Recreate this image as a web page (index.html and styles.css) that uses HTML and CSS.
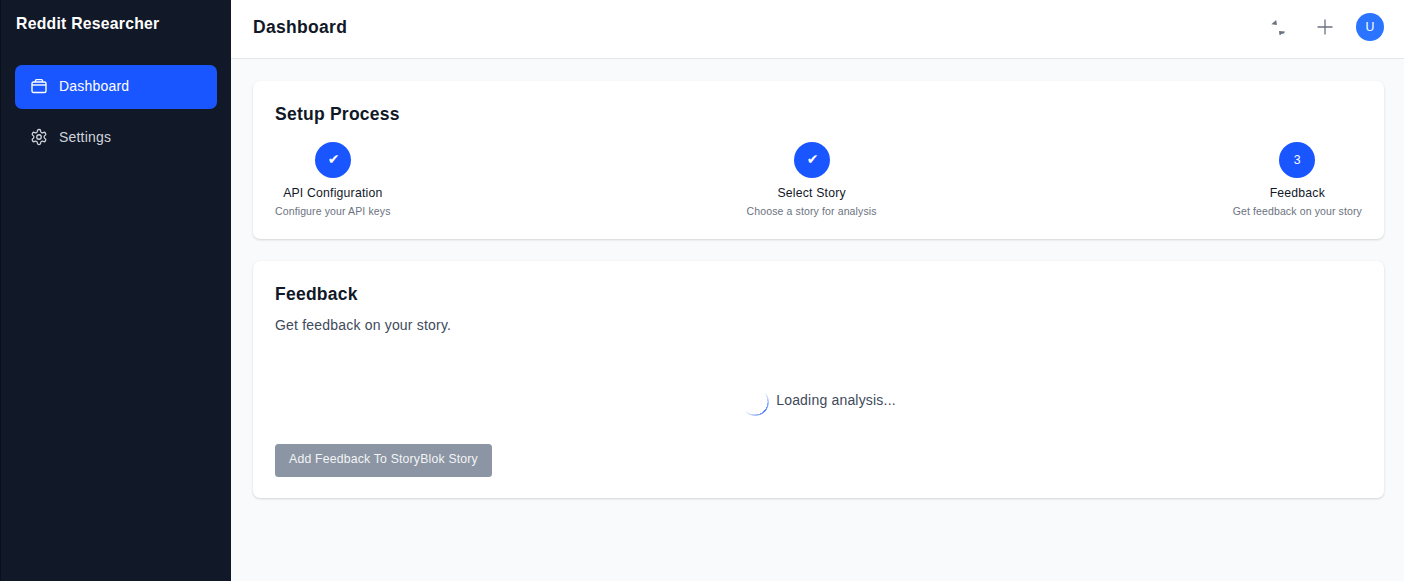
FILE: index.html
```html
<!DOCTYPE html>
<html lang="en">
<head>
<meta charset="utf-8">
<title>Dashboard</title>
<link rel="stylesheet" href="styles.css">
</head>
<body>
<div class="app">
  <aside class="sidebar">
    <div class="brand">Reddit Researcher</div>
    <nav class="nav">
      <a class="nav-item active">
        <svg class="nav-icon" viewBox="0 0 16 16" fill="none" stroke="currentColor" stroke-width="1.4" stroke-linejoin="round"><rect x="1" y="4" width="14" height="10.5" rx="1.5"/><path d="M4.5 4V2.6a1 1 0 0 1 1-1h5a1 1 0 0 1 1 1V4"/><path d="M1 7h14"/></svg>
        <span>Dashboard</span>
      </a>
      <a class="nav-item">
        <svg class="nav-icon gear" viewBox="0 0 24 24" fill="none" stroke="currentColor" stroke-width="1.7" stroke-linecap="round" stroke-linejoin="round"><path d="M12.22 2h-.44a2 2 0 0 0-2 2v.18a2 2 0 0 1-1 1.73l-.43.25a2 2 0 0 1-2 0l-.15-.08a2 2 0 0 0-2.73.73l-.22.38a2 2 0 0 0 .73 2.73l.15.1a2 2 0 0 1 1 1.72v.51a2 2 0 0 1-1 1.74l-.15.09a2 2 0 0 0-.73 2.73l.22.38a2 2 0 0 0 2.73.73l.15-.08a2 2 0 0 1 2 0l.43.25a2 2 0 0 1 1 1.73V20a2 2 0 0 0 2 2h.44a2 2 0 0 0 2-2v-.18a2 2 0 0 1 1-1.73l.43-.25a2 2 0 0 1 2 0l.15.08a2 2 0 0 0 2.73-.73l.22-.39a2 2 0 0 0-.73-2.73l-.15-.08a2 2 0 0 1-1-1.74v-.5a2 2 0 0 1 1-1.74l.15-.09a2 2 0 0 0 .73-2.73l-.22-.38a2 2 0 0 0-2.73-.73l-.15.08a2 2 0 0 1-2 0l-.43-.25a2 2 0 0 1-1-1.73V4a2 2 0 0 0-2-2z"/><circle cx="12" cy="12" r="3"/></svg>
        <span>Settings</span>
      </a>
    </nav>
  </aside>
  <div class="content">
    <header class="topbar">
      <h1 class="page-title">Dashboard</h1>
      <div class="actions">
        <svg class="action-glyph" viewBox="0 0 16 16" fill="#6b7280"><path d="M0.3 5.3 5.2 1 6 6z"/><path d="M8 12l6 .5-1 2-3 .5-.5 2-1-.5z"/></svg>
        <svg class="action-plus" viewBox="0 0 16 16" fill="none" stroke="#6b7280" stroke-width="1.3"><path d="M8 0.5v15M0.5 8h15"/></svg>
        <div class="avatar">U</div>
      </div>
    </header>
    <main class="main">
      <section class="card">
        <h2 class="card-title">Setup Process</h2>
        <div class="steps">
          <div class="step">
            <div class="step-circle check">✔</div>
            <div class="step-label">API Configuration</div>
            <div class="step-sub">Configure your API keys</div>
          </div>
          <div class="step">
            <div class="step-circle check">✔</div>
            <div class="step-label">Select Story</div>
            <div class="step-sub">Choose a story for analysis</div>
          </div>
          <div class="step">
            <div class="step-circle">3</div>
            <div class="step-label">Feedback</div>
            <div class="step-sub">Get feedback on your story</div>
          </div>
        </div>
      </section>
      <section class="card">
        <h2 class="card-title">Feedback</h2>
        <p class="card-text">Get feedback on your story.</p>
        <div class="loading">
          <div class="spinner"></div>
          <span>Loading analysis...</span>
        </div>
        <button class="submit" disabled>Add Feedback To StoryBlok Story</button>
      </section>
    </main>
  </div>
</div>
</body>
</html>
```
FILE: styles.css
```css
* { box-sizing: border-box; }
html, body { margin: 0; height: 100%; }
body { font-family: "Liberation Sans", Arial, sans-serif; letter-spacing: 0.012em; background: #f9fafb; color: #111827; overflow: hidden; }
.app { display: flex; height: 581px; }
.sidebar { width: 231px; flex: none; background: #111827; border-left: 1px solid #0b0f17; padding: 14px 14px 0; }
.brand { font-size: 15.75px; font-weight: 700; letter-spacing: 0.016em; color: #fff; line-height: 20px; padding-left: 1px; }
.nav { margin-top: 31px; display: flex; flex-direction: column; gap: 7px; }
.nav-item { display: flex; align-items: center; gap: 12px; height: 44px; padding: 0 16px 2px; border-radius: 7px; font-size: 14px; color: #d1d5db; }
.nav-item.active { background: #1a56ff; color: #fff; }
.nav-icon { width: 16px; height: 16px; flex: none; }
.nav-icon.gear { width: 18px; height: 18px; margin: 0 -1px; }
.content { flex: 1; display: flex; flex-direction: column; min-width: 0; }
.topbar { height: 59px; flex: none; background: #fff; border-bottom: 1px solid #e5e7eb; display: flex; align-items: center; justify-content: space-between; padding: 0 20px 4px 22px; }
.page-title { margin: 0; font-size: 17.5px; font-weight: 700; letter-spacing: 0.018em; color: #111827; }
.actions { display: flex; align-items: center; }
.action-glyph { width: 16px; height: 16px; margin-right: 30px; }
.action-plus { width: 16px; height: 16px; margin-right: 23px; }
.avatar { width: 28px; height: 28px; border-radius: 50%; background: #2b74ff; color: #fff; font-size: 12.25px; display: flex; align-items: center; justify-content: center; }
.main { padding: 22px 20px 22px 22px; display: flex; flex-direction: column; gap: 22px; }
.card { background: #fff; border-radius: 7px; padding: 22px 22px 21px; box-shadow: 0 1px 3px rgba(0,0,0,.1), 0 1px 2px rgba(0,0,0,.06); }
.card-title { margin: 0; padding-top: 1px; font-size: 17.5px; font-weight: 700; letter-spacing: 0.014em; line-height: 21px; color: #111827; }
.steps { display: flex; justify-content: space-between; margin-top: 17px; }
.step { display: flex; flex-direction: column; align-items: center; }
.step-circle { width: 36px; height: 36px; border-radius: 50%; background: #1a56ff; color: #fff; font-size: 12.25px; display: flex; align-items: center; justify-content: center; padding-bottom: 1px; }
.step-circle.check { font-family: "DejaVu Sans", sans-serif; font-size: 14px; padding: 0 0 3px 2px; }
.step-label { margin-top: 7px; font-size: 12.25px; line-height: 17px; color: #111827; }
.step-sub { margin-top: 2px; font-size: 10.5px; line-height: 14px; letter-spacing: 0.012em; color: #6b7280; }
.card-text { margin: 12px 0 0; font-size: 14px; line-height: 17px; color: #404a5a; }
.loading { display: flex; align-items: center; justify-content: center; gap: 7px; height: 28px; margin-top: 52px; font-size: 14px; color: #404a5a; }
.spinner { width: 28px; height: 28px; margin-top: 4px; border-radius: 50%; opacity: .8; background: conic-gradient(transparent 45deg, #1a56ff 130deg, transparent 230deg); -webkit-mask: radial-gradient(closest-side, transparent calc(100% - 1.6px), #000 calc(100% - 1.4px)); mask: radial-gradient(closest-side, transparent calc(100% - 1.6px), #000 calc(100% - 1.4px)); }
.submit { display: block; margin-top: 30px; height: 33px; width: 217px; padding: 0 0 4px; border: 0; border-radius: 3.5px; background: #8b95a3; color: #f3f4f6; font-family: inherit; letter-spacing: inherit; font-size: 12.25px; }
```
